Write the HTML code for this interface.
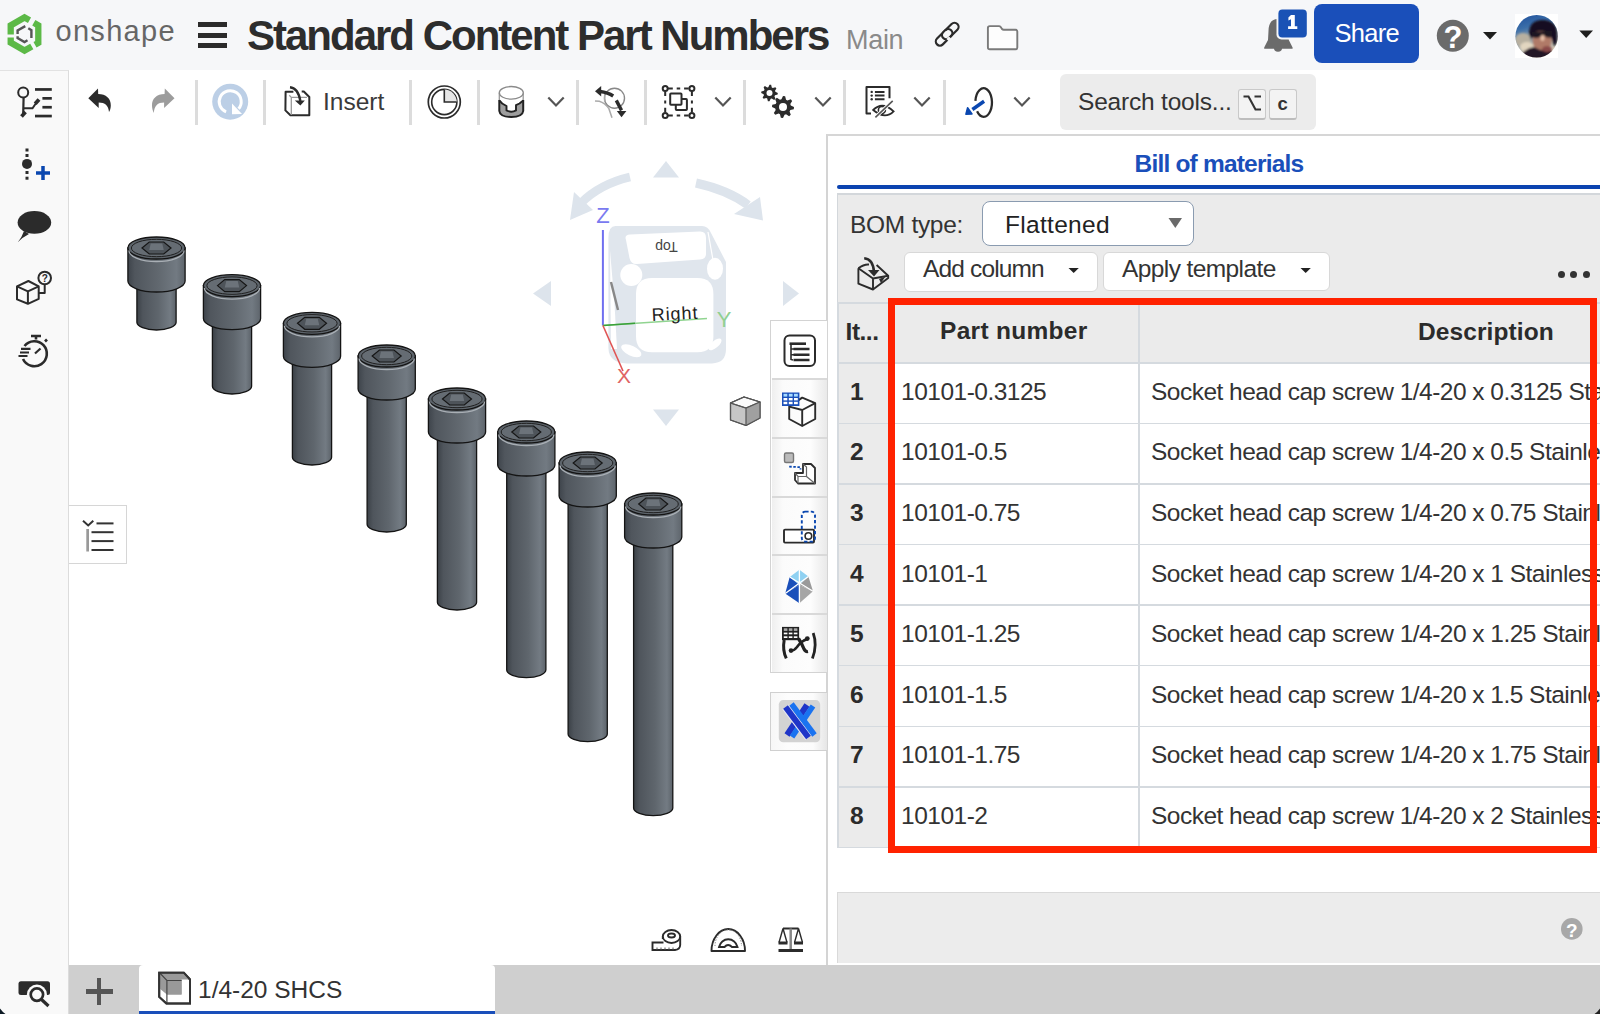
<!DOCTYPE html>
<html><head><meta charset="utf-8"><style>
html,body{margin:0;padding:0;}
body{width:1600px;height:1014px;overflow:hidden;position:relative;background:#fff;font-family:"Liberation Sans", sans-serif;}
</style></head><body>
<div style="position:absolute;left:0px;top:0px;width:1600px;height:70px;background:#f6f7f9"></div><svg style="position:absolute;left:4px;top:10px;overflow:visible;" width="44" height="48" viewBox="0 0 44 48">
<g fill="none" stroke="#5cb947" stroke-width="6.3" stroke-linejoin="miter" stroke-miterlimit="3">
<path d="M25.5 10.2 L20.5 7.4 L6.7 15.4 L6.7 24.5"/>
<path d="M29.8 12.8 L34.3 15.4 L34.3 33 L31 34.8"/>
<path d="M6.7 27.5 L6.7 32.6 L20.5 40.6 L27.8 36.4"/>
</g>
<g fill="none" stroke="#555" stroke-width="2.4">
<path d="M21.3 16.1 L13.6 20.4 L13.6 24"/>
<path d="M24.3 18.3 L27.4 20.1 L27.4 28"/>
<path d="M13.6 26.3 L13.6 28 L20.5 32 L23.5 30.3"/>
</g>
</svg><div style="position:absolute;left:55.5px;top:17.45px;font-size:29px;line-height:29px;color:#666;font-weight:normal;letter-spacing:1.3px;white-space:pre;">onshape</div><div style="position:absolute;left:198px;top:22px;width:29px;height:5px;background:#2b2b2b"></div><div style="position:absolute;left:198px;top:32.5px;width:29px;height:5px;background:#2b2b2b"></div><div style="position:absolute;left:198px;top:43px;width:29px;height:5px;background:#2b2b2b"></div><div style="position:absolute;left:247px;top:14.94px;font-size:42px;line-height:42px;color:#2d2d2d;font-weight:bold;letter-spacing:-2px;white-space:pre;">Standard Content Part Numbers</div><div style="position:absolute;left:846px;top:27.44px;font-size:27px;line-height:27px;color:#8a8a8a;font-weight:normal;letter-spacing:-0.3px;white-space:pre;">Main</div><div style="position:absolute;left:0px;top:70px;width:69px;height:944px;background:#f9f9f9;border-right:1.5px solid #dcdcdc;border-top:1px solid #e2e2e2;box-sizing:border-box"></div><div style="position:absolute;left:323px;top:90.26px;font-size:24.5px;line-height:24.5px;color:#3a3a3a;font-weight:normal;letter-spacing:0px;white-space:pre;">Insert</div><div style="position:absolute;left:194.5px;top:79.5px;width:3px;height:45px;background:#dcdcdc"></div><div style="position:absolute;left:262.5px;top:79.5px;width:3px;height:45px;background:#dcdcdc"></div><div style="position:absolute;left:408.5px;top:79.5px;width:3px;height:45px;background:#dcdcdc"></div><div style="position:absolute;left:476.5px;top:79.5px;width:3px;height:45px;background:#dcdcdc"></div><div style="position:absolute;left:575.5px;top:79.5px;width:3px;height:45px;background:#dcdcdc"></div><div style="position:absolute;left:643.5px;top:79.5px;width:3px;height:45px;background:#dcdcdc"></div><div style="position:absolute;left:742.5px;top:79.5px;width:3px;height:45px;background:#dcdcdc"></div><div style="position:absolute;left:842.5px;top:79.5px;width:3px;height:45px;background:#dcdcdc"></div><div style="position:absolute;left:942.5px;top:79.5px;width:3px;height:45px;background:#dcdcdc"></div><div style="position:absolute;left:1060px;top:74px;width:256px;height:56px;background:#ececec;border-radius:6px"></div><div style="position:absolute;left:1078px;top:89.76px;font-size:24.5px;line-height:24.5px;color:#333;font-weight:normal;letter-spacing:-0.2px;white-space:pre;">Search tools...</div><div style="position:absolute;left:1238px;top:88.5px;width:28px;height:31.5px;background:#f3f3f3;border:1px solid #c9c9c9;border-bottom:2px solid #bdbdbd;border-radius:3px;box-sizing:border-box"></div><div style="position:absolute;left:1269px;top:88.5px;width:28px;height:31.5px;background:#f3f3f3;border:1px solid #c9c9c9;border-bottom:2px solid #bdbdbd;border-radius:3px;box-sizing:border-box"></div><svg style="position:absolute;left:1238px;top:88px;overflow:visible;" width="30" height="32" viewBox="0 0 30 32"><path d="M5.5 8.5 L10.5 8.5 L17.5 21.5 L23 21.5 M16.5 8.5 L23 8.5" fill="none" stroke="#333" stroke-width="2.1"/></svg><div style="position:absolute;left:1277.5px;top:94.54px;font-size:18.5px;line-height:18.5px;color:#333;font-weight:bold;letter-spacing:0px;white-space:pre;">c</div><div style="position:absolute;left:1314px;top:4px;width:105px;height:58.5px;background:#1a4fba;border-radius:8px"></div><div style="position:absolute;left:1334.5px;top:21.21px;font-size:25.5px;line-height:25.5px;color:#fff;font-weight:normal;letter-spacing:-0.7px;white-space:pre;">Share</div><div style="position:absolute;left:826.3px;top:134px;width:774px;height:830.5px;background:#fff;border-left:2px solid #d4d4d4;border-top:2px solid #d6d6d6;box-sizing:border-box"></div><div style="position:absolute;left:1134.5px;top:152.26px;font-size:24.5px;line-height:24.5px;color:#1a4fba;font-weight:bold;letter-spacing:-0.8px;white-space:pre;">Bill of materials</div><div style="position:absolute;left:837px;top:185.3px;width:763px;height:3.7px;background:#0b43b0;border-radius:2px 0 0 2px"></div><div style="position:absolute;left:837px;top:193px;width:763px;height:110px;background:#ebebeb;border-top:2px solid #d3d7db;border-left:1.5px solid #d3d7db;box-sizing:border-box"></div><div style="position:absolute;left:850px;top:212.96px;font-size:24.5px;line-height:24.5px;color:#333;font-weight:normal;letter-spacing:-0.3px;white-space:pre;">BOM type:</div><div style="position:absolute;left:982px;top:200.5px;width:212px;height:45px;background:#fff;border:1.5px solid #8a9bb0;border-radius:8px;box-sizing:border-box"></div><div style="position:absolute;left:1005px;top:212.96px;font-size:24.5px;line-height:24.5px;color:#222;font-weight:normal;letter-spacing:0.3px;white-space:pre;">Flattened</div><div style="position:absolute;left:903.7px;top:252.4px;width:194px;height:40px;background:#fff;border:1.5px solid #d8d8d8;border-radius:6px;box-sizing:border-box"></div><div style="position:absolute;left:923px;top:256.96px;font-size:24.5px;line-height:24.5px;color:#333;font-weight:normal;letter-spacing:-0.85px;white-space:pre;">Add column</div><div style="position:absolute;left:1103px;top:252.4px;width:227px;height:39px;background:#fff;border:1.5px solid #d8d8d8;border-radius:6px;box-sizing:border-box"></div><div style="position:absolute;left:1122px;top:256.76px;font-size:24.5px;line-height:24.5px;color:#333;font-weight:normal;letter-spacing:-0.6px;white-space:pre;">Apply template</div><div style="position:absolute;left:837px;top:302px;width:763px;height:545px;background:#fff"></div><div style="position:absolute;left:837px;top:302px;width:763px;height:60px;background:#ebebeb"></div><div style="position:absolute;left:837px;top:302px;width:52px;height:545px;background:#ebebeb"></div><div style="position:absolute;left:837px;top:302px;width:763px;height:1.5px;background:#d5dadf"></div><div style="position:absolute;left:837px;top:362.0px;width:763px;height:1.5px;background:#d5dadf"></div><div style="position:absolute;left:837px;top:422.59000000000003px;width:763px;height:1.5px;background:#d5dadf"></div><div style="position:absolute;left:837px;top:483.18px;width:763px;height:1.5px;background:#d5dadf"></div><div style="position:absolute;left:837px;top:543.77px;width:763px;height:1.5px;background:#d5dadf"></div><div style="position:absolute;left:837px;top:604.36px;width:763px;height:1.5px;background:#d5dadf"></div><div style="position:absolute;left:837px;top:664.95px;width:763px;height:1.5px;background:#d5dadf"></div><div style="position:absolute;left:837px;top:725.54px;width:763px;height:1.5px;background:#d5dadf"></div><div style="position:absolute;left:837px;top:786.13px;width:763px;height:1.5px;background:#d5dadf"></div><div style="position:absolute;left:837px;top:846.72px;width:763px;height:1.5px;background:#d5dadf"></div><div style="position:absolute;left:837px;top:302px;width:1.5px;height:545px;background:#d5dadf"></div><div style="position:absolute;left:888px;top:302px;width:1.5px;height:545px;background:#d5dadf"></div><div style="position:absolute;left:1138px;top:302px;width:1.5px;height:545px;background:#d5dadf"></div><div style="position:absolute;left:845.6px;top:319.66px;font-size:24.5px;line-height:24.5px;color:#2b2b2b;font-weight:bold;letter-spacing:-0.5px;white-space:pre;">It...</div><div style="position:absolute;left:940px;top:319.46px;font-size:24.5px;line-height:24.5px;color:#2b2b2b;font-weight:bold;letter-spacing:0.3px;white-space:pre;">Part number</div><div style="position:absolute;left:1418px;top:319.76px;font-size:24.5px;line-height:24.5px;color:#2b2b2b;font-weight:bold;letter-spacing:0.1px;white-space:pre;">Description</div><div style="position:absolute;left:0;top:0;width:1600px;height:1014px;overflow:hidden;pointer-events:none"><div style="position:absolute;left:850px;top:379.86px;font-size:24.5px;line-height:24.5px;color:#2b2b2b;font-weight:bold;letter-spacing:0px;white-space:pre;">1</div><div style="position:absolute;left:901px;top:379.86px;font-size:24.5px;line-height:24.5px;color:#333;font-weight:normal;letter-spacing:-0.5px;white-space:pre;">10101-0.3125</div><div style="position:absolute;left:1151px;top:379.86px;font-size:24.5px;line-height:24.5px;color:#333;font-weight:normal;letter-spacing:-0.52px;white-space:pre;">Socket head cap screw 1/4-20 x 0.3125 Stainless Steel</div><div style="position:absolute;left:850px;top:440.45px;font-size:24.5px;line-height:24.5px;color:#2b2b2b;font-weight:bold;letter-spacing:0px;white-space:pre;">2</div><div style="position:absolute;left:901px;top:440.45px;font-size:24.5px;line-height:24.5px;color:#333;font-weight:normal;letter-spacing:-0.5px;white-space:pre;">10101-0.5</div><div style="position:absolute;left:1151px;top:440.45px;font-size:24.5px;line-height:24.5px;color:#333;font-weight:normal;letter-spacing:-0.52px;white-space:pre;">Socket head cap screw 1/4-20 x 0.5 Stainless Steel</div><div style="position:absolute;left:850px;top:501.04px;font-size:24.5px;line-height:24.5px;color:#2b2b2b;font-weight:bold;letter-spacing:0px;white-space:pre;">3</div><div style="position:absolute;left:901px;top:501.04px;font-size:24.5px;line-height:24.5px;color:#333;font-weight:normal;letter-spacing:-0.5px;white-space:pre;">10101-0.75</div><div style="position:absolute;left:1151px;top:501.04px;font-size:24.5px;line-height:24.5px;color:#333;font-weight:normal;letter-spacing:-0.52px;white-space:pre;">Socket head cap screw 1/4-20 x 0.75 Stainless Steel</div><div style="position:absolute;left:850px;top:561.63px;font-size:24.5px;line-height:24.5px;color:#2b2b2b;font-weight:bold;letter-spacing:0px;white-space:pre;">4</div><div style="position:absolute;left:901px;top:561.63px;font-size:24.5px;line-height:24.5px;color:#333;font-weight:normal;letter-spacing:-0.5px;white-space:pre;">10101-1</div><div style="position:absolute;left:1151px;top:561.63px;font-size:24.5px;line-height:24.5px;color:#333;font-weight:normal;letter-spacing:-0.52px;white-space:pre;">Socket head cap screw 1/4-20 x 1 Stainless Steel</div><div style="position:absolute;left:850px;top:622.22px;font-size:24.5px;line-height:24.5px;color:#2b2b2b;font-weight:bold;letter-spacing:0px;white-space:pre;">5</div><div style="position:absolute;left:901px;top:622.22px;font-size:24.5px;line-height:24.5px;color:#333;font-weight:normal;letter-spacing:-0.5px;white-space:pre;">10101-1.25</div><div style="position:absolute;left:1151px;top:622.22px;font-size:24.5px;line-height:24.5px;color:#333;font-weight:normal;letter-spacing:-0.52px;white-space:pre;">Socket head cap screw 1/4-20 x 1.25 Stainless Steel</div><div style="position:absolute;left:850px;top:682.81px;font-size:24.5px;line-height:24.5px;color:#2b2b2b;font-weight:bold;letter-spacing:0px;white-space:pre;">6</div><div style="position:absolute;left:901px;top:682.81px;font-size:24.5px;line-height:24.5px;color:#333;font-weight:normal;letter-spacing:-0.5px;white-space:pre;">10101-1.5</div><div style="position:absolute;left:1151px;top:682.81px;font-size:24.5px;line-height:24.5px;color:#333;font-weight:normal;letter-spacing:-0.52px;white-space:pre;">Socket head cap screw 1/4-20 x 1.5 Stainless Steel</div><div style="position:absolute;left:850px;top:743.40px;font-size:24.5px;line-height:24.5px;color:#2b2b2b;font-weight:bold;letter-spacing:0px;white-space:pre;">7</div><div style="position:absolute;left:901px;top:743.40px;font-size:24.5px;line-height:24.5px;color:#333;font-weight:normal;letter-spacing:-0.5px;white-space:pre;">10101-1.75</div><div style="position:absolute;left:1151px;top:743.40px;font-size:24.5px;line-height:24.5px;color:#333;font-weight:normal;letter-spacing:-0.52px;white-space:pre;">Socket head cap screw 1/4-20 x 1.75 Stainless Steel</div><div style="position:absolute;left:850px;top:803.99px;font-size:24.5px;line-height:24.5px;color:#2b2b2b;font-weight:bold;letter-spacing:0px;white-space:pre;">8</div><div style="position:absolute;left:901px;top:803.99px;font-size:24.5px;line-height:24.5px;color:#333;font-weight:normal;letter-spacing:-0.5px;white-space:pre;">10101-2</div><div style="position:absolute;left:1151px;top:803.99px;font-size:24.5px;line-height:24.5px;color:#333;font-weight:normal;letter-spacing:-0.52px;white-space:pre;">Socket head cap screw 1/4-20 x 2 Stainless Steel</div></div><div style="position:absolute;left:888.4px;top:298px;width:708.6px;height:554.8px;border:7.3px solid #ff2200;box-sizing:border-box"></div><div style="position:absolute;left:837px;top:892.4px;width:763px;height:71px;background:#ececec;border-top:1.5px solid #d9d9d9;border-left:1.5px solid #d9d9d9;box-sizing:border-box"></div><div style="position:absolute;left:69px;top:964.5px;width:1531px;height:50px;background:#cfcfcf"></div><div style="position:absolute;left:139px;top:964.5px;width:356px;height:50px;background:#fff;border-radius:4px 4px 0 0"></div><div style="position:absolute;left:139px;top:1011px;width:356px;height:3px;background:#1a4fba"></div><div style="position:absolute;left:198px;top:977.76px;font-size:24.5px;line-height:24.5px;color:#333;font-weight:normal;letter-spacing:0px;white-space:pre;">1/4-20 SHCS</div><div style="position:absolute;left:85.5px;top:989px;width:27px;height:4.5px;background:#555"></div><div style="position:absolute;left:96.7px;top:978px;width:4.5px;height:26.5px;background:#555"></div><div style="position:absolute;left:69px;top:504.7px;width:57.5px;height:59.5px;background:#fff;border:1.5px solid #d6d6d6;border-left:none;box-sizing:border-box"></div><svg style="position:absolute;left:925px;top:15px;overflow:visible;" width="40" height="40" viewBox="0 0 40 40">
<g fill="none" stroke="#2b2b2b" stroke-width="2.2">
<rect x="21.2" y="6" width="8.2" height="20" rx="4.1" transform="rotate(45 25.3 16)"/>
<rect x="15" y="12.3" width="8.2" height="20" rx="4.1" transform="rotate(45 19.1 22.3)"/>
</g>
<path d="M19.5 19.5 L22 17" stroke="#f6f7f9" stroke-width="3"/>
<path d="M22.5 25 L25 22.5" stroke="#f6f7f9" stroke-width="3"/>
</svg><svg style="position:absolute;left:986px;top:25px;overflow:visible;" width="34" height="26" viewBox="0 0 34 26"><path d="M1.9 3 Q1.9 1.1 3.8 1.1 L13 1.1 Q14 1.1 14.7 2 L16 4 Q16.7 4.8 17.7 4.8 L29.5 4.8 Q31.3 4.8 31.3 6.6 L31.3 22.5 Q31.3 24.3 29.5 24.3 L3.8 24.3 Q1.9 24.3 1.9 22.5 Z" fill="#fdfdfd" stroke="#7a7a7a" stroke-width="1.9"/></svg><svg style="position:absolute;left:1255px;top:0px;overflow:visible;" width="60" height="60" viewBox="0 0 60 60">
<path d="M23 19 C16 19 13.5 24 13.5 31 L13 40 L9.2 47.5 L9.2 48.8 L37.6 48.8 L37.6 47.5 L33.8 40 L33.3 31 C33.3 24 30 19 23 19 Z" fill="#6b6b6b"/>
<path d="M19 48 A4 3.8 0 0 0 27 48 Z" fill="#6b6b6b"/>
<rect x="21.5" y="7.5" width="32" height="32" rx="5" fill="#f6f7f9"/>
<rect x="23.4" y="9.5" width="28.4" height="28" rx="4" fill="#1a52b5"/>
</svg><svg style="position:absolute;left:1286px;top:13px;overflow:visible;" width="14" height="18" viewBox="0 0 14 18"><path d="M5 2 L8.8 2 L8.8 13.3 L11.3 13.3 L11.3 16 L2.1 16 L2.1 13.3 L5 13.3 L5 6.2 L2.4 7.6 L2.4 4.6 Z" fill="#fff"/></svg><svg style="position:absolute;left:1436px;top:19px;overflow:visible;" width="34" height="34" viewBox="0 0 34 34"><circle cx="16.8" cy="16.8" r="16" fill="#6b6b6b"/></svg><div style="position:absolute;left:1443.5px;top:22.25px;font-size:31px;line-height:31px;color:#fff;font-weight:bold;letter-spacing:0px;white-space:pre;">?</div><svg style="position:absolute;left:1482px;top:31px;overflow:visible;" width="16" height="10" viewBox="0 0 16 10"><path d="M1 1 L15 1 L8 8.5 Z" fill="#1e1e1e"/></svg><svg style="position:absolute;left:1578px;top:30px;overflow:visible;" width="16" height="10" viewBox="0 0 16 10"><path d="M1.3 0.5 L15 0.5 L8.2 8 Z" fill="#1e1e1e"/></svg><div style="position:absolute;left:1515px;top:14px;width:43px;height:44px;background:#fff"></div><svg style="position:absolute;left:1514px;top:14px;overflow:visible;" width="44" height="44" viewBox="0 0 44 44">
<defs><clipPath id="av"><circle cx="22.7" cy="22.2" r="21.3"/></clipPath>
<linearGradient id="sky" x1="0" y1="0" x2="0.3" y2="1"><stop offset="0" stop-color="#1b4c9c"/><stop offset="0.35" stop-color="#3b6ea8"/><stop offset="0.6" stop-color="#8a9aa8"/><stop offset="1" stop-color="#d8cdb8"/></linearGradient>
<filter id="bl" x="-20%" y="-20%" width="140%" height="140%"><feGaussianBlur stdDeviation="1.3"/></filter></defs>
<g clip-path="url(#av)">
<rect x="0" y="0" width="44" height="44" fill="url(#sky)"/>
<g filter="url(#bl)">
<ellipse cx="9" cy="26" rx="8" ry="7" fill="#b8b0a0"/>
<ellipse cx="13" cy="33" rx="7" ry="5" fill="#e2d6c0"/>
<ellipse cx="28" cy="26" rx="9.5" ry="12" fill="#b07a68"/>
<path d="M15 20 Q15 5 30 6 Q44 7 43 22 Q44 30 40 32 L37 22 Q30 14 19 19 L17 26 Z" fill="#141020"/>
<path d="M18 18 L38 17 L38 23 Q33 25 29 21 Q24 26 18 23 Z" fill="#1d1620"/>
<ellipse cx="28.5" cy="24" rx="2" ry="3" fill="#e8c0a8"/>
<path d="M6 46 Q9 34 20 33 Q28 38 36 36 Q42 40 44 46 Z" fill="#231428"/>
<ellipse cx="33" cy="35" rx="5" ry="3" fill="#8a4a48"/>
</g></g></svg><svg style="position:absolute;left:80px;top:78px;overflow:visible;" width="40" height="40" viewBox="0 0 40 40"><path d="M8.3 20.3 L18 10.5 L18.2 16 C26 16 31 20.5 30.8 27.5 C30.8 30 30 32.5 29 34 C28.5 27.5 25 24.5 18.7 24.5 L18.7 30 Z" fill="#2b2b2b"/></svg><svg style="position:absolute;left:140px;top:78px;overflow:visible;" width="40" height="40" viewBox="0 0 40 40"><path d="M34.5 20.3 L24.8 10.5 L24.6 16 C16.8 16 11.8 20.5 12 27.5 C12 30 12.8 33 13.8 35 C14.3 27.5 17.8 24.5 24.1 24.5 L24.1 30 Z" fill="#9c9c9c"/></svg><svg style="position:absolute;left:210px;top:82px;overflow:visible;" width="40" height="40" viewBox="0 0 40 40"><circle cx="20.2" cy="19.7" r="18" fill="#bccfe6"/>
<path d="M16.1 29.9 A11 11 0 1 1 28.6 26.8" fill="none" stroke="#fff" stroke-width="3"/>
<path d="M22 21.5 L22 32.3 L32 31.9 Z" fill="#fff"/></svg><svg style="position:absolute;left:270px;top:80px;overflow:visible;" width="50" height="44" viewBox="0 0 50 44"><g fill="none" stroke="#2b2b2b" stroke-width="2" stroke-linejoin="round">
<path d="M23.4 11.7 L15.6 11.7 L15.4 30.4 L20.4 35.2 L39.3 35.2 L39.3 17 L33.8 11.5 L31.7 11.5"/></g>
<g fill="none" stroke="#999" stroke-width="1.3"><path d="M19.3 15.2 L21.3 17.4 L21.3 35 M21.3 17.4 L37 17.4"/></g>
<path d="M20 7.3 Q28 8 30.4 21" fill="none" stroke="#2b2b2b" stroke-width="2.4"/>
<path d="M24.8 20.4 L34.8 20.4 L30.4 25.6 Z" fill="#2b2b2b"/></svg><svg style="position:absolute;left:426px;top:84px;overflow:visible;" width="36" height="36" viewBox="0 0 36 36"><g fill="none" stroke="#2b2b2b"><circle cx="18.3" cy="18" r="16" stroke-width="1.7"/><circle cx="18.3" cy="18" r="12.6" stroke-width="1.6"/></g>
<path d="M18.3 5.6 A12.4 12.4 0 0 1 30.7 18 L18.3 18 Z" fill="#e6e6e6"/>
<path d="M18.3 5.6 L18.3 18 L30.7 18" fill="none" stroke="#2b2b2b" stroke-width="1.6"/></svg><svg style="position:absolute;left:490px;top:80px;overflow:visible;" width="44" height="44" viewBox="0 0 44 44"><path d="M9.3 20.4 L12.2 23.5 L16.5 26 L16.5 30.4 Q21.3 33 26 30.4 L26 25.2 L29.5 23.5 L33.2 20.4 L33.2 31 Q33 37 21.3 37 Q9.5 37 9.3 31 Z" fill="#9e9e9e"/>
<path d="M9.3 12.8 L9.3 20.4 M33.2 12.8 L33.2 20.4" stroke="#999" stroke-width="1.3"/>
<ellipse cx="21.3" cy="12.8" rx="12" ry="6.3" fill="#fff" stroke="#8a8a8a" stroke-width="1.3"/>
<path d="M9.3 20.4 L12.2 23.5 L16.5 26 L16.5 30.4 Q21.3 33 26 30.4 L26 25.2 L29.5 23.5 L33.2 20.4" fill="none" stroke="#222" stroke-width="1.9" stroke-linejoin="round"/>
<path d="M9.3 20 L9.3 31 Q10 37 21.3 37 Q32.5 37 33.2 31 L33.2 20" fill="none" stroke="#222" stroke-width="2"/></svg><svg style="position:absolute;left:547px;top:96px;overflow:visible;" width="18" height="12" viewBox="0 0 18 12"><path d="M1.3 1.5 L9 9.5 L16.7 1.5" fill="none" stroke="#555" stroke-width="2.2"/></svg><svg style="position:absolute;left:714px;top:96px;overflow:visible;" width="18" height="12" viewBox="0 0 18 12"><path d="M1.3 1.5 L9 9.5 L16.7 1.5" fill="none" stroke="#555" stroke-width="2.2"/></svg><svg style="position:absolute;left:813.5px;top:96px;overflow:visible;" width="18" height="12" viewBox="0 0 18 12"><path d="M1.3 1.5 L9 9.5 L16.7 1.5" fill="none" stroke="#555" stroke-width="2.2"/></svg><svg style="position:absolute;left:913px;top:96px;overflow:visible;" width="18" height="12" viewBox="0 0 18 12"><path d="M1.3 1.5 L9 9.5 L16.7 1.5" fill="none" stroke="#555" stroke-width="2.2"/></svg><svg style="position:absolute;left:1012.5px;top:96px;overflow:visible;" width="18" height="12" viewBox="0 0 18 12"><path d="M1.3 1.5 L9 9.5 L16.7 1.5" fill="none" stroke="#555" stroke-width="2.2"/></svg><svg style="position:absolute;left:593px;top:84px;overflow:visible;" width="36" height="36" viewBox="0 0 36 36"><circle cx="21.5" cy="14.2" r="10" fill="none" stroke="#888" stroke-width="1.4"/>
<path d="M2 16.9 L6.3 17.3 Q12 19 15.9 24.7 L19 33.8" fill="none" stroke="#aaa" stroke-width="1.5"/>
<path d="M11.6 9 L11.6 17.7" stroke="#aaa" stroke-width="1.4"/>
<path d="M7 7.5 Q15 8.5 20.2 12" fill="none" stroke="#2b2b2b" stroke-width="3.4"/>
<path d="M8.2 2 L2 7.3 L8.2 12.4 Z" fill="#2b2b2b"/>
<path d="M23.3 16.4 L28.5 26.4" stroke="#2b2b2b" stroke-width="3.4"/>
<path d="M23.8 27 L33.4 27 L28.5 33.2 Z" fill="#2b2b2b"/></svg><svg style="position:absolute;left:660px;top:84px;overflow:visible;" width="36" height="36" viewBox="0 0 36 36"><g fill="none" stroke="#2b2b2b" stroke-width="2">
<path d="M8 4.5 L12.8 4.5 M16.7 4.5 L20.2 4.5 M24.1 4.5 L28.7 4.5 M8 31.4 L12.8 31.4 M16.7 31.4 L20.2 31.4 M24.1 31.4 L28.7 31.4"/>
<path d="M5.2 7.3 L5.2 12 M5.2 16.4 L5.2 19.5 M5.2 23.8 L5.2 28.2 M31.9 7.3 L31.9 12 M31.9 16.4 L31.9 19.5 M31.9 23.8 L31.9 28.2"/>
<circle cx="5.2" cy="4.5" r="2.5"/><circle cx="31.9" cy="4.5" r="2.5"/><circle cx="5.2" cy="31.4" r="2.5"/><circle cx="31.9" cy="31.4" r="2.5"/>
<rect x="15.8" y="15.1" width="11.1" height="10.9" rx="0.8"/><rect x="10.2" y="9.5" width="11.3" height="11.3" rx="0.8" fill="#fff"/></g></svg><svg style="position:absolute;left:760px;top:84px;overflow:visible;" width="38" height="36" viewBox="0 0 38 36"><polygon points="17.80,9.00 17.64,10.62 15.02,11.29 14.47,12.32 15.37,14.87 14.11,15.90 11.79,14.52 10.67,14.86 9.50,17.30 7.88,17.14 7.21,14.52 6.18,13.97 3.63,14.87 2.60,13.61 3.98,11.29 3.64,10.17 1.20,9.00 1.36,7.38 3.98,6.71 4.53,5.68 3.63,3.13 4.89,2.10 7.21,3.48 8.33,3.14 9.50,0.70 11.12,0.86 11.79,3.48 12.82,4.03 15.37,3.13 16.40,4.39 15.02,6.71 15.36,7.83" fill="#2b2b2b"/><circle cx="9.5" cy="9" r="3" fill="#fff"/><polygon points="34.00,23.00 33.79,25.15 30.32,26.03 29.59,27.40 30.78,30.78 29.11,32.15 26.03,30.32 24.55,30.77 23.00,34.00 20.85,33.79 19.97,30.32 18.60,29.59 15.22,30.78 13.85,29.11 15.68,26.03 15.23,24.55 12.00,23.00 12.21,20.85 15.68,19.97 16.41,18.60 15.22,15.22 16.89,13.85 19.97,15.68 21.45,15.23 23.00,12.00 25.15,12.21 26.03,15.68 27.40,16.41 30.78,15.22 32.15,16.89 30.32,19.97 30.77,21.45" fill="#2b2b2b"/><circle cx="23" cy="23" r="4" fill="#fff"/></svg><svg style="position:absolute;left:863px;top:84px;overflow:visible;" width="36" height="36" viewBox="0 0 36 36"><path d="M8 29.4 L3.5 29.4 L3.5 2.9 L26.5 2.9 L26.5 14.2" fill="none" stroke="#2b2b2b" stroke-width="2" stroke-linejoin="round"/>
<g fill="#2b2b2b"><circle cx="8.7" cy="7.9" r="1.2"/><circle cx="8.7" cy="11.6" r="1.2"/><circle cx="8.7" cy="15.3" r="1.2"/></g>
<path d="M11.9 7.9 L21.5 7.9 M11.9 11.6 L21.5 11.6 M11.9 15.3 L21.5 15.3" stroke="#2b2b2b" stroke-width="2"/>
<path d="M10.2 26 Q19.3 17 30.6 27.3 Q22 36 10.2 26 Z" fill="none" stroke="#2b2b2b" stroke-width="1.8"/>
<circle cx="18.9" cy="26" r="3.5" fill="none" stroke="#2b2b2b" stroke-width="1.6"/>
<path d="M12.4 33.3 L29.7 16.8" stroke="#fff" stroke-width="3.5"/>
<path d="M12.4 33.3 L29.7 16.8" stroke="#555" stroke-width="1.6"/></svg><svg style="position:absolute;left:962px;top:84px;overflow:visible;" width="36" height="36" viewBox="0 0 36 36"><path d="M13.4 16.8 A8.3 14.3 0 1 1 15.1 27.3" fill="none" stroke="#2b2b2b" stroke-width="2.3"/>
<path d="M22.1 17.3 L10.4 25.5" stroke="#0a47b0" stroke-width="3.5"/>
<path d="M3.9 30.3 L5.6 23.8 L10 29.9 Z" fill="#0a47b0" stroke="#0a47b0" stroke-width="1.5" stroke-linejoin="round"/></svg><svg style="position:absolute;left:10px;top:80px;overflow:visible;" width="50" height="50" viewBox="0 0 50 50"><circle cx="13.2" cy="12.4" r="5" fill="none" stroke="#2b2b2b" stroke-width="2"/>
<path d="M13.6 17.4 L13.2 34" stroke="#2b2b2b" stroke-width="2.2"/>
<path d="M11.5 36.5 L15.5 32" stroke="#2b2b2b" stroke-width="3.6"/>
<path d="M14 28.2 L22.5 28.2 L26.5 22.5" fill="none" stroke="#2b2b2b" stroke-width="2"/>
<path d="M25.2 23.8 L29 19.5" stroke="#2b2b2b" stroke-width="3.8"/>
<g fill="#2b2b2b"><rect x="25" y="8.1" width="16.8" height="2.7"/><rect x="32.4" y="17" width="9.4" height="2.7"/><rect x="32.4" y="25.9" width="9.4" height="2.7"/><rect x="25" y="34.7" width="16.8" height="2.7"/></g></svg><svg style="position:absolute;left:10px;top:140px;overflow:visible;" width="50" height="50" viewBox="0 0 50 50"><g fill="#2b2b2b"><rect x="15.5" y="8.5" width="3" height="3"/><rect x="15.5" y="14" width="3" height="3"/><rect x="15.5" y="31" width="3" height="3"/><rect x="15.5" y="36.7" width="3" height="3"/>
<circle cx="17" cy="23.9" r="5"/></g>
<path d="M26 33 L40 33 M33 26 L33 40" stroke="#0a47b0" stroke-width="3.5"/></svg><svg style="position:absolute;left:10px;top:200px;overflow:visible;" width="50" height="50" viewBox="0 0 50 50"><ellipse cx="24.4" cy="22.4" rx="16.8" ry="11.3" fill="#2b2b2b"/>
<path d="M14 31 Q12 37 8 42 Q13 37 19 34 Z" fill="#2b2b2b"/></svg><svg style="position:absolute;left:10px;top:262px;overflow:visible;" width="50" height="50" viewBox="0 0 50 50"><g fill="none" stroke="#2b2b2b" stroke-width="2" stroke-linejoin="round">
<path d="M18.4 19 L7 24.4 L7 37.4 L17.9 41.8 L28.7 36.9 L28.7 24.4 Z"/>
<path d="M7 24.4 L17.9 29.3 L28.7 24.4 M17.9 29.3 L17.9 41.8"/>
<circle cx="34.7" cy="16" r="6.3"/>
<path d="M34.7 22.5 L34.7 31 L28.7 31"/></g>
<text x="34.7" y="19.8" font-size="10" font-weight="bold" text-anchor="middle" fill="#2b2b2b" font-family="Liberation Sans">?</text></svg><svg style="position:absolute;left:10px;top:325px;overflow:visible;" width="50" height="50" viewBox="0 0 50 50"><g fill="none" stroke="#2b2b2b" stroke-width="2.6">
<path d="M14.5 21 A12.5 12.5 0 1 1 13 34"/>
<path d="M21 11 L31 11 M26 11 L26 14.5"/>
<path d="M35 16.5 L37 14.5"/>
<path d="M11 23.8 L20.5 23.8 M10 27.5 L19 27.5 M8.5 31 L17.5 31" stroke-width="2.2"/>
<path d="M25 28.5 L30.5 23.5" stroke-width="2.2"/></g></svg><svg style="position:absolute;left:10px;top:960px;overflow:visible;" width="50" height="54" viewBox="0 0 50 54"><rect x="8.5" y="21.3" width="31.5" height="13.6" rx="2.5" fill="#2b2b2b"/>
<circle cx="26.9" cy="34.6" r="10" fill="#f9f9f9"/>
<circle cx="26.9" cy="34.6" r="6.2" fill="none" stroke="#2b2b2b" stroke-width="2.7"/>
<path d="M31.5 39.5 L38.5 46" stroke="#2b2b2b" stroke-width="3.2"/></svg><svg style="position:absolute;left:69px;top:505px;overflow:visible;" width="58" height="59" viewBox="0 0 58 59"><path d="M14 15.8 L19.2 20.5 L24.3 15.8" fill="none" stroke="#333" stroke-width="2"/>
<rect x="17.3" y="24" width="2.7" height="22.5" fill="#999"/>
<g fill="#333"><rect x="27.5" y="17.4" width="17" height="2"/><rect x="22.5" y="26.2" width="22" height="2"/><rect x="22.5" y="35.1" width="22" height="2"/><rect x="22.5" y="44" width="22" height="2"/></g></svg><svg style="position:absolute;left:150px;top:965px;overflow:visible;" width="50" height="49" viewBox="0 0 50 49"><path d="M9.2 7.7 L33.8 7.7 L40 14.5 L40 38.4 L16.4 38.4 L9.2 31.9 Z" fill="#fff" stroke="#333" stroke-width="2"/>
<path d="M9.8 8.5 L33.5 8.5 L39 14.5 L31.6 14.5 L31.6 29.5 L16.9 29.5 L10.2 24 Z" fill="#9a9a9a"/>
<path d="M16.9 15.5 L31.6 15.5 L31.6 29.5 L16.9 29.5 Z" fill="#999"/>
<path d="M9.8 8 L16.9 15.5 L31.6 15.5 M16.9 15.5 L16.9 38" fill="none" stroke="#444" stroke-width="1.2"/>
<path d="M9.2 7.7 L33.8 7.7 L40 14.5 L40 38.4 L16.4 38.4 L9.2 31.9 Z" fill="none" stroke="#333" stroke-width="2"/></svg><svg style="position:absolute;left:850px;top:250px;overflow:visible;" width="50" height="45" viewBox="0 0 50 45"><g fill="none" stroke="#2b2b2b" stroke-width="1.9" stroke-linejoin="round">
<path d="M8.4 18.2 L8.4 33.7 L23 39.5 L38.2 28 L38.2 25.7 L26.6 15 M8.4 18.2 Q14 14 19 14.5"/>
<path d="M8.4 18.2 L23 28.5 L38.2 25.7 M23 28.5 L23 39.5"/>
<path d="M14.2 8.3 Q23 9 24 22" stroke-width="2.6"/></g>
<path d="M18 20 L29.5 20 L24 26.5 Z" fill="#2b2b2b"/>
<path d="M29 29 L35.5 26.5 L31 33 Z" fill="#2b2b2b"/></svg><svg style="position:absolute;left:1561px;top:918px;overflow:visible;" width="23" height="23" viewBox="0 0 23 23"><circle cx="10.8" cy="10.9" r="10.8" fill="#a8a8a8"/></svg><div style="position:absolute;left:1566px;top:921.41px;font-size:19px;line-height:19px;color:#fff;font-weight:bold;letter-spacing:0px;white-space:pre;">?</div><div style="position:absolute;left:1557.5px;top:270.8px;width:7px;height:7px;background:#333;border-radius:50%"></div><div style="position:absolute;left:1570.2px;top:270.8px;width:7px;height:7px;background:#333;border-radius:50%"></div><div style="position:absolute;left:1582.5px;top:270.8px;width:7px;height:7px;background:#333;border-radius:50%"></div><svg style="position:absolute;left:1166px;top:216px;overflow:visible;" width="18" height="14" viewBox="0 0 18 14"><path d="M2.5 2 L16 2 L9.3 12 Z" fill="#6a6a6a"/></svg><svg style="position:absolute;left:1066px;top:265px;overflow:visible;" width="16" height="10" viewBox="0 0 16 10"><path d="M2.5 3 L12.8 3 L7.7 8 Z" fill="#222"/></svg><svg style="position:absolute;left:1298px;top:265px;overflow:visible;" width="16" height="10" viewBox="0 0 16 10"><path d="M2.5 3 L12.8 3 L7.7 8 Z" fill="#222"/></svg><svg style="position:absolute;left:650px;top:925px;overflow:visible;" width="34" height="30" viewBox="0 0 34 30"><g fill="none" stroke="#2b2b2b" stroke-width="1.9">
<ellipse cx="21.5" cy="11.5" rx="8.7" ry="6.5"/><ellipse cx="21.5" cy="10.5" rx="3.5" ry="2"/>
<path d="M12.8 11.5 L12.8 14 M30.2 11.5 L30.2 20 Q30 24.5 25 25 L2.5 25 L2.5 17.5 L13.5 17.5"/></g>
<path d="M7 25 L7 22.5 M11 25 L11 22.5 M15 25 L15 22.5 M19 25 L19 22.5 M23 25 L23 22.5" stroke="#555" stroke-width="1"/></svg><svg style="position:absolute;left:708px;top:925px;overflow:visible;" width="42" height="30" viewBox="0 0 42 30"><g fill="none" stroke="#2b2b2b" stroke-width="1.9">
<path d="M3.5 26 A16 21 0 0 1 37 26 Z" stroke-linejoin="round"/>
<path d="M11 22 A9.5 10 0 0 1 29.5 22 L24 22 Q20 18 16.5 22 Z"/></g>
<path d="M7 21 A13 16 0 0 1 33.5 21" fill="none" stroke="#777" stroke-width="1" stroke-dasharray="1.2 1.5"/></svg><svg style="position:absolute;left:776px;top:925px;overflow:visible;" width="30" height="30" viewBox="0 0 30 30"><path d="M7 3.5 L22.5 3.5" stroke="#2b2b2b" stroke-width="2"/>
<path d="M14.7 3.5 L14.7 24" stroke="#888" stroke-width="2.5"/>
<path d="M2.5 25.5 L27 25.5" stroke="#2b2b2b" stroke-width="3"/>
<path d="M7 3.5 L3 17.5 M7 3.5 L11 17.5 M22.5 3.5 L18.5 17.5 M22.5 3.5 L26.5 17.5" stroke="#2b2b2b" stroke-width="1.4"/>
<path d="M2.5 16.5 L11.5 16.5 L11.5 19.5 L2.5 19.5 Z M18 16.5 L27 16.5 L27 19.5 L18 19.5 Z" fill="#2b2b2b"/></svg><div style="position:absolute;left:770px;top:320px;width:57px;height:353px;background:#fff;border:1.5px solid #d3d3d3;border-right:none;box-sizing:border-box"></div><div style="position:absolute;left:771.5px;top:378px;width:55.5px;height:59px;background:linear-gradient(90deg,#efefef 0%,#fbfbfb 20%,#fdfdfd 70%,#e9e9e9 100%);border-top:2px solid #d9d9d9;box-sizing:border-box"></div><div style="position:absolute;left:771.5px;top:437px;width:55.5px;height:59px;background:linear-gradient(90deg,#efefef 0%,#fbfbfb 20%,#fdfdfd 70%,#e9e9e9 100%);border-top:2px solid #d9d9d9;box-sizing:border-box"></div><div style="position:absolute;left:771.5px;top:496px;width:55.5px;height:58px;background:linear-gradient(90deg,#efefef 0%,#fbfbfb 20%,#fdfdfd 70%,#e9e9e9 100%);border-top:2px solid #d9d9d9;box-sizing:border-box"></div><div style="position:absolute;left:771.5px;top:554px;width:55.5px;height:59px;background:linear-gradient(90deg,#efefef 0%,#fbfbfb 20%,#fdfdfd 70%,#e9e9e9 100%);border-top:2px solid #d9d9d9;box-sizing:border-box"></div><div style="position:absolute;left:771.5px;top:613px;width:55.5px;height:59px;background:linear-gradient(90deg,#efefef 0%,#fbfbfb 20%,#fdfdfd 70%,#e9e9e9 100%);border-top:2px solid #d9d9d9;box-sizing:border-box"></div><div style="position:absolute;left:770px;top:691.5px;width:57px;height:59px;background:linear-gradient(90deg,#f7f7f7 0%,#fdfdfd 30%,#fcfcfc 75%,#e6e6e6 100%);border:1.5px solid #d0d0d0;border-right:none;box-sizing:border-box"></div><svg style="position:absolute;left:775px;top:325px;overflow:visible;" width="50" height="50" viewBox="0 0 50 50"><rect x="9.5" y="10.5" width="30.5" height="30.5" rx="5" fill="none" stroke="#2b2b2b" stroke-width="2"/>
<g stroke="#2b2b2b" fill="none"><path d="M14.5 18.7 L31 18.7" stroke-width="2.6"/><path d="M16 18.7 L16 34.5 L18 35" stroke-width="1.6"/>
<path d="M16 24 L19 24 M16 29.7 L19 29.7" stroke-width="1.4"/>
<path d="M18.5 24 L34.5 24 M18.5 29.7 L34.5 29.7 M18.5 35 L34.5 35" stroke-width="2.6"/></g></svg><svg style="position:absolute;left:775px;top:385px;overflow:visible;" width="50" height="50" viewBox="0 0 50 50"><g fill="none" stroke="#2b2b2b" stroke-width="1.9" stroke-linejoin="round">
<path d="M27.2 12.6 L40.2 18.2 L40.2 34 L27.2 41 L14.2 34 L14.2 21.6 Z"/><path d="M14.2 21.6 L27.2 25 L40.2 18.2 M27.2 25 L27.2 41"/></g>
<rect x="7" y="7.5" width="17.4" height="13.5" fill="#1a4fba"/>
<g fill="#fff"><rect x="8.5" y="8.8" width="3.8" height="2.8" fill="#a8dcff"/><rect x="13.8" y="8.8" width="3.8" height="2.8" fill="#a8dcff"/><rect x="19" y="8.8" width="3.8" height="2.8" fill="#a8dcff"/>
<rect x="8.5" y="13" width="3.8" height="2.4"/><rect x="13.8" y="13" width="3.8" height="2.4"/><rect x="19" y="13" width="3.8" height="2.4"/>
<rect x="8.5" y="16.8" width="3.8" height="2.4"/><rect x="13.8" y="16.8" width="3.8" height="2.4"/><rect x="19" y="16.8" width="3.8" height="2.4"/></g></svg><svg style="position:absolute;left:775px;top:440px;overflow:visible;" width="50" height="55" viewBox="0 0 50 55"><rect x="9.5" y="13" width="9" height="9.5" rx="1.5" fill="#bbb" stroke="#777" stroke-width="1.4"/>
<path d="M14.2 26.6 L25.5 27.2 L25.5 29.5" fill="none" stroke="#0a47b0" stroke-width="1.8" stroke-dasharray="2.5 1.6"/>
<path d="M20 33 L28 33 L28 24 L36 24 L40 28 L40 43.5 L23 43.5 L20 40 Z" fill="#fff" stroke="#2b2b2b" stroke-width="1.8" stroke-linejoin="round"/>
<path d="M20 33 L23 36.5 L31.5 36.5 L31.5 27 L28 24 M23 36.5 L23 43.5 M31.5 36.5 L40 43.5" fill="none" stroke="#666" stroke-width="1.2"/></svg><svg style="position:absolute;left:775px;top:500px;overflow:visible;" width="50" height="50" viewBox="0 0 50 50"><rect x="9" y="29.6" width="30" height="13" rx="1" fill="#fff" stroke="#2b2b2b" stroke-width="1.9"/>
<rect x="26.8" y="11.6" width="13.2" height="30" rx="3.5" fill="none" stroke="#0a47b0" stroke-width="1.9" stroke-dasharray="3.3 2.2"/>
<circle cx="33.4" cy="36" r="3.3" fill="none" stroke="#2b2b2b" stroke-width="1.6"/></svg><svg style="position:absolute;left:775px;top:555px;overflow:visible;" width="50" height="55" viewBox="0 0 50 55"><path d="M24.4 30 L24.4 14.7 L14.7 22 Z" fill="#8fd1f2"/><path d="M24.4 30 L24.4 14.7 L33.4 21.5 Z" fill="#8fd1f2"/>
<path d="M24.4 30 L14.7 22 L10.2 38.5 Z" fill="#1a4fba"/><path d="M24.4 30 L10.2 38.5 L24.4 48.2 Z" fill="#1a4fba"/>
<path d="M24.4 30 L33.4 21.5 L38 36.3 Z" fill="#9a9a9a"/><path d="M24.4 30 L38 36.3 L24.4 48.2 Z" fill="#a6a6a6"/>
<path d="M24.4 14.7 L24.4 48.2 M14.7 22 L38 36.3 M10.2 38.5 L33.4 21.5" stroke="#fff" stroke-width="1.3"/></svg><svg style="position:absolute;left:775px;top:620px;overflow:visible;" width="50" height="50" viewBox="0 0 50 50"><rect x="7" y="6.9" width="17.1" height="13.3" fill="#222"/>
<g fill="#fff"><rect x="8.8" y="12.6" width="3.6" height="1.7"/><rect x="13.8" y="12.6" width="3.6" height="1.7"/><rect x="18.8" y="12.6" width="3.6" height="1.7"/>
<rect x="8.8" y="16.3" width="3.6" height="1.7"/><rect x="13.8" y="16.3" width="3.6" height="1.7"/><rect x="18.8" y="16.3" width="3.6" height="1.7"/></g>
<g fill="#aaa"><rect x="8.8" y="8.3" width="3.6" height="2.6"/><rect x="13.8" y="8.3" width="3.6" height="2.6"/><rect x="18.8" y="8.3" width="3.6" height="2.6"/></g>
<path d="M9.2 20 Q7.3 30 11.3 38.4" fill="none" stroke="#222" stroke-width="3"/>
<path d="M38.2 13 Q42.6 25 37.4 38.4" fill="none" stroke="#222" stroke-width="2.8"/>
<path d="M23.5 18.5 Q27 24 29 29 Q30.5 32 33 31.5" fill="none" stroke="#222" stroke-width="3.3"/>
<path d="M32.5 19 Q26 21 22 27 Q19 31 16 30.5" fill="none" stroke="#222" stroke-width="2.6"/>
<circle cx="32.3" cy="18.6" r="2.4" fill="#222"/><circle cx="16" cy="30.6" r="2.3" fill="#222"/></svg><svg style="position:absolute;left:765px;top:680px;overflow:visible;" width="70" height="80" viewBox="0 0 70 80"><rect x="13.8" y="20.1" width="41.4" height="42.2" rx="4.5" fill="#d3d3d3"/>
<path d="M42 25 L22 55" stroke="#1f35c8" stroke-width="6"/>
<path d="M48 26 L27 57" stroke="#1a73f0" stroke-width="5.5"/>
<path d="M20.5 27 L43.5 57.5" stroke="#e8e8f0" stroke-width="8"/>
<path d="M20.5 27 L43.5 57.5" stroke="#1f35c8" stroke-width="6"/>
<path d="M26.5 24 L49.5 55" stroke="#1a73f0" stroke-width="5.5"/></svg><svg style="position:absolute;left:520px;top:150px;overflow:visible;" width="300" height="290" viewBox="0 0 300 290">
<g fill="#dde4ec">
<path d="M146 11 L159 27.6 L133 27.6 Z"/>
<path d="M13 143.5 L31 131 L31 156 Z"/>
<path d="M279 143.5 L263 131 L263 156 Z"/>
<path d="M146 276 L159 259.6 L133 259.6 Z"/>
</g>
<path d="M110 27 Q80 34 61 53" fill="none" stroke="#dde4ec" stroke-width="8.5"/>
<path d="M50 70 L54 42 L73 60 Z" fill="#dde4ec"/>
<path d="M176 33 Q208 40 228 55" fill="none" stroke="#dde4ec" stroke-width="9"/>
<path d="M243 70.5 L240 47 L214 64 Z" fill="#dde4ec"/>
<path d="M95.5 76 L182 76 Q188 76 191 83 L206 112 L206 199 Q206 213 192 213.4 L106.6 213.4 Q89 213 88.4 198 L88.4 88 Q88.4 76 95.5 76 Z" fill="#e0e6ed"/>
<path d="M90 101 Q95 150 97 199 L91 199 Z" fill="#fff"/>
<path d="M188 82 L193 110" stroke="#fff" stroke-width="1.2"/>
<path d="M106 90 Q104 85 110 84.5 L180 81.6 Q186 81.5 186 88 L186 104 Q186 109 180 109.5 L117 114 Q111 114.5 109.5 108 Z" fill="#fff"/>
<circle cx="111.3" cy="125" r="11" fill="#fff"/>
<ellipse cx="195" cy="118.7" rx="8" ry="11" fill="#fff"/>
<path d="M116 144 Q116 128 132 128 L177.4 128 Q193.4 128 193.4 144 L193.4 186.3 Q193.4 202.3 177.4 202.3 L132 202.3 Q116 202.3 116 186.3 Z" fill="#fff"/>
<ellipse cx="111.3" cy="200.7" rx="11" ry="5" transform="rotate(25 111.3 200.7)" fill="#fff"/>
<ellipse cx="195" cy="194.4" rx="8" ry="3.5" transform="rotate(-40 195 194.4)" fill="#fff"/>
<path d="M91 132 L98 160" stroke="#888" stroke-width="2.4"/>
<path d="M82.9 80 L82.9 175.5" stroke="#6f6ff0" stroke-width="2"/>
<path d="M82.9 175.5 L187 168.4" stroke="#90d490" stroke-width="1.5"/><path d="M82.9 175.5 L115 173.3" stroke="#3aa03a" stroke-width="1.6"/>
<path d="M82.9 175.5 L103 221" stroke="#e05454" stroke-width="1.6"/>
<text x="83" y="73" font-size="22" fill="#7a7af0" text-anchor="middle" font-family="Liberation Sans">Z</text>
<text x="204" y="177" font-size="22" fill="#90d090" text-anchor="middle" font-family="Liberation Sans">Y</text>
<text x="104" y="233" font-size="21" fill="#e06464" text-anchor="middle" font-family="Liberation Sans">X</text>
<text x="155" y="169.8" font-size="18" letter-spacing="0.9" fill="#222" text-anchor="middle" font-family="Liberation Sans" transform="rotate(-3 155 164)">Right</text>
<text x="146.4" y="100" font-size="14" fill="#444" text-anchor="middle" font-family="Liberation Sans" transform="rotate(180 146.4 96)">Top</text>
</svg><svg style="position:absolute;left:728px;top:393px;overflow:visible;" width="36" height="36" viewBox="0 0 36 36"><path d="M2.5 10 L16 4 L32 9 L32 25 L18 32.5 L2.5 27 Z" fill="#c6c6c6" stroke="#555" stroke-width="1.2" stroke-linejoin="round"/>
<path d="M2.5 10 L18 15 L32 9 L16 4 Z" fill="#fafafa" stroke="#555" stroke-width="1.2" stroke-linejoin="round"/>
<path d="M18 15 L18 32.5 L32 25 L32 9 Z" fill="#a0a0a0"/>
<path d="M2.5 10 L18 15 L32 9 M18 15 L18 32.5" fill="none" stroke="#555" stroke-width="1.2"/>
<path d="M2.5 10 L16 4 L32 9 L32 25 L18 32.5 L2.5 27 Z" fill="none" stroke="#555" stroke-width="1.2" stroke-linejoin="round"/></svg><svg style="position:absolute;left:0px;top:0px;overflow:visible;" width="800" height="900" viewBox="0 0 800 900"><defs>
<linearGradient id="hg" x1="0" y1="0" x2="1" y2="0"><stop offset="0" stop-color="#3e444b"/><stop offset="0.12" stop-color="#50565d"/><stop offset="0.55" stop-color="#626970"/><stop offset="0.85" stop-color="#727a82"/><stop offset="1" stop-color="#5e656c"/></linearGradient>
<linearGradient id="sg" x1="0" y1="0" x2="1" y2="0"><stop offset="0" stop-color="#3b4147"/><stop offset="0.15" stop-color="#4f555c"/><stop offset="0.55" stop-color="#5f666d"/><stop offset="0.85" stop-color="#737b83"/><stop offset="1" stop-color="#5c636a"/></linearGradient>
</defs><path d="M136.9 281 L136.9 322.2 A19.6 7.8 0 0 0 176.1 322.2 L176.1 281 Z" fill="url(#sg)" stroke="#141414" stroke-width="1.3"/><path d="M127.9 248 L127.9 281 A28.6 11 0 0 0 185.1 281 L185.1 248 Z" fill="url(#hg)" stroke="#141414" stroke-width="1.3"/><ellipse cx="156.5" cy="248" rx="28.6" ry="11" fill="#5d646b" stroke="#141414" stroke-width="1.3"/><ellipse cx="156.5" cy="248" rx="25.1" ry="8.7" fill="#656c73" stroke="#202020" stroke-width="1"/><path d="M128.9 250.5 A27.6 11 0 0 0 184.1 250.5" fill="none" stroke="#a9afb5" stroke-width="1.3"/><polygon points="142.0,248 149.25,242 163.75,242 171.0,248 163.75,254 149.25,254" fill="#4e545a" stroke="#161616" stroke-width="1.2"/><polygon points="150.75,243.5 162.25,243.5 163.75,250 149.25,250" fill="#6c737a"/><path d="M212.4 318.6 L212.4 386.2 A19.6 7.8 0 0 0 251.6 386.2 L251.6 318.6 Z" fill="url(#sg)" stroke="#141414" stroke-width="1.3"/><path d="M203.4 285.6 L203.4 318.6 A28.6 11 0 0 0 260.6 318.6 L260.6 285.6 Z" fill="url(#hg)" stroke="#141414" stroke-width="1.3"/><ellipse cx="232" cy="285.6" rx="28.6" ry="11" fill="#5d646b" stroke="#141414" stroke-width="1.3"/><ellipse cx="232" cy="285.6" rx="25.1" ry="8.7" fill="#656c73" stroke="#202020" stroke-width="1"/><path d="M204.4 288.1 A27.6 11 0 0 0 259.6 288.1" fill="none" stroke="#a9afb5" stroke-width="1.3"/><polygon points="217.5,285.6 224.75,279.6 239.25,279.6 246.5,285.6 239.25,291.6 224.75,291.6" fill="#4e545a" stroke="#161616" stroke-width="1.2"/><polygon points="226.25,281.1 237.75,281.1 239.25,287.6 224.75,287.6" fill="#6c737a"/><path d="M292.4 356.3 L292.4 457.2 A19.6 7.8 0 0 0 331.6 457.2 L331.6 356.3 Z" fill="url(#sg)" stroke="#141414" stroke-width="1.3"/><path d="M283.4 323.3 L283.4 356.3 A28.6 11 0 0 0 340.6 356.3 L340.6 323.3 Z" fill="url(#hg)" stroke="#141414" stroke-width="1.3"/><ellipse cx="312" cy="323.3" rx="28.6" ry="11" fill="#5d646b" stroke="#141414" stroke-width="1.3"/><ellipse cx="312" cy="323.3" rx="25.1" ry="8.7" fill="#656c73" stroke="#202020" stroke-width="1"/><path d="M284.4 325.8 A27.6 11 0 0 0 339.6 325.8" fill="none" stroke="#a9afb5" stroke-width="1.3"/><polygon points="297.5,323.3 304.75,317.3 319.25,317.3 326.5,323.3 319.25,329.3 304.75,329.3" fill="#4e545a" stroke="#161616" stroke-width="1.2"/><polygon points="306.25,318.8 317.75,318.8 319.25,325.3 304.75,325.3" fill="#6c737a"/><path d="M367.09999999999997 389 L367.09999999999997 524.2 A19.6 7.8 0 0 0 406.3 524.2 L406.3 389 Z" fill="url(#sg)" stroke="#141414" stroke-width="1.3"/><path d="M358.09999999999997 356 L358.09999999999997 389 A28.6 11 0 0 0 415.3 389 L415.3 356 Z" fill="url(#hg)" stroke="#141414" stroke-width="1.3"/><ellipse cx="386.7" cy="356" rx="28.6" ry="11" fill="#5d646b" stroke="#141414" stroke-width="1.3"/><ellipse cx="386.7" cy="356" rx="25.1" ry="8.7" fill="#656c73" stroke="#202020" stroke-width="1"/><path d="M359.09999999999997 358.5 A27.6 11 0 0 0 414.3 358.5" fill="none" stroke="#a9afb5" stroke-width="1.3"/><polygon points="372.2,356 379.45,350 393.95,350 401.2,356 393.95,362 379.45,362" fill="#4e545a" stroke="#161616" stroke-width="1.2"/><polygon points="380.95,351.5 392.45,351.5 393.95,358 379.45,358" fill="#6c737a"/><path d="M437.4 432 L437.4 602.2 A19.6 7.8 0 0 0 476.6 602.2 L476.6 432 Z" fill="url(#sg)" stroke="#141414" stroke-width="1.3"/><path d="M428.4 399 L428.4 432 A28.6 11 0 0 0 485.6 432 L485.6 399 Z" fill="url(#hg)" stroke="#141414" stroke-width="1.3"/><ellipse cx="457" cy="399" rx="28.6" ry="11" fill="#5d646b" stroke="#141414" stroke-width="1.3"/><ellipse cx="457" cy="399" rx="25.1" ry="8.7" fill="#656c73" stroke="#202020" stroke-width="1"/><path d="M429.4 401.5 A27.6 11 0 0 0 484.6 401.5" fill="none" stroke="#a9afb5" stroke-width="1.3"/><polygon points="442.5,399 449.75,393 464.25,393 471.5,399 464.25,405 449.75,405" fill="#4e545a" stroke="#161616" stroke-width="1.2"/><polygon points="451.25,394.5 462.75,394.5 464.25,401 449.75,401" fill="#6c737a"/><path d="M506.69999999999993 465 L506.69999999999993 669.8000000000001 A19.6 7.8 0 0 0 545.9 669.8000000000001 L545.9 465 Z" fill="url(#sg)" stroke="#141414" stroke-width="1.3"/><path d="M497.69999999999993 432 L497.69999999999993 465 A28.6 11 0 0 0 554.9 465 L554.9 432 Z" fill="url(#hg)" stroke="#141414" stroke-width="1.3"/><ellipse cx="526.3" cy="432" rx="28.6" ry="11" fill="#5d646b" stroke="#141414" stroke-width="1.3"/><ellipse cx="526.3" cy="432" rx="25.1" ry="8.7" fill="#656c73" stroke="#202020" stroke-width="1"/><path d="M498.69999999999993 434.5 A27.6 11 0 0 0 553.9 434.5" fill="none" stroke="#a9afb5" stroke-width="1.3"/><polygon points="511.79999999999995,432 519.05,426 533.55,426 540.8,432 533.55,438 519.05,438" fill="#4e545a" stroke="#161616" stroke-width="1.2"/><polygon points="520.55,427.5 532.05,427.5 533.55,434 519.05,434" fill="#6c737a"/><path d="M568.1 496 L568.1 733.9000000000001 A19.6 7.8 0 0 0 607.3000000000001 733.9000000000001 L607.3000000000001 496 Z" fill="url(#sg)" stroke="#141414" stroke-width="1.3"/><path d="M559.1 463 L559.1 496 A28.6 11 0 0 0 616.3000000000001 496 L616.3000000000001 463 Z" fill="url(#hg)" stroke="#141414" stroke-width="1.3"/><ellipse cx="587.7" cy="463" rx="28.6" ry="11" fill="#5d646b" stroke="#141414" stroke-width="1.3"/><ellipse cx="587.7" cy="463" rx="25.1" ry="8.7" fill="#656c73" stroke="#202020" stroke-width="1"/><path d="M560.1 465.5 A27.6 11 0 0 0 615.3000000000001 465.5" fill="none" stroke="#a9afb5" stroke-width="1.3"/><polygon points="573.2,463 580.45,457 594.95,457 602.2,463 594.95,469 580.45,469" fill="#4e545a" stroke="#161616" stroke-width="1.2"/><polygon points="581.95,458.5 593.45,458.5 594.95,465 580.45,465" fill="#6c737a"/><path d="M633.6 537 L633.6 807.9000000000001 A19.6 7.8 0 0 0 672.8000000000001 807.9000000000001 L672.8000000000001 537 Z" fill="url(#sg)" stroke="#141414" stroke-width="1.3"/><path d="M624.6 504 L624.6 537 A28.6 11 0 0 0 681.8000000000001 537 L681.8000000000001 504 Z" fill="url(#hg)" stroke="#141414" stroke-width="1.3"/><ellipse cx="653.2" cy="504" rx="28.6" ry="11" fill="#5d646b" stroke="#141414" stroke-width="1.3"/><ellipse cx="653.2" cy="504" rx="25.1" ry="8.7" fill="#656c73" stroke="#202020" stroke-width="1"/><path d="M625.6 506.5 A27.6 11 0 0 0 680.8000000000001 506.5" fill="none" stroke="#a9afb5" stroke-width="1.3"/><polygon points="638.7,504 645.95,498 660.45,498 667.7,504 660.45,510 645.95,510" fill="#4e545a" stroke="#161616" stroke-width="1.2"/><polygon points="647.45,499.5 658.95,499.5 660.45,506 645.95,506" fill="#6c737a"/></svg><svg style="position:absolute;left:0px;top:1004px;overflow:visible;" width="10" height="10" viewBox="0 0 10 10"><path d="M0 4.5 Q2.5 8 5.5 10 L0 10 Z" fill="#0d1a24"/></svg><svg style="position:absolute;left:1590px;top:1004px;overflow:visible;" width="10" height="10" viewBox="0 0 10 10"><path d="M10 4.5 Q7.5 8 4.5 10 L10 10 Z" fill="#222"/></svg>
</body></html>
